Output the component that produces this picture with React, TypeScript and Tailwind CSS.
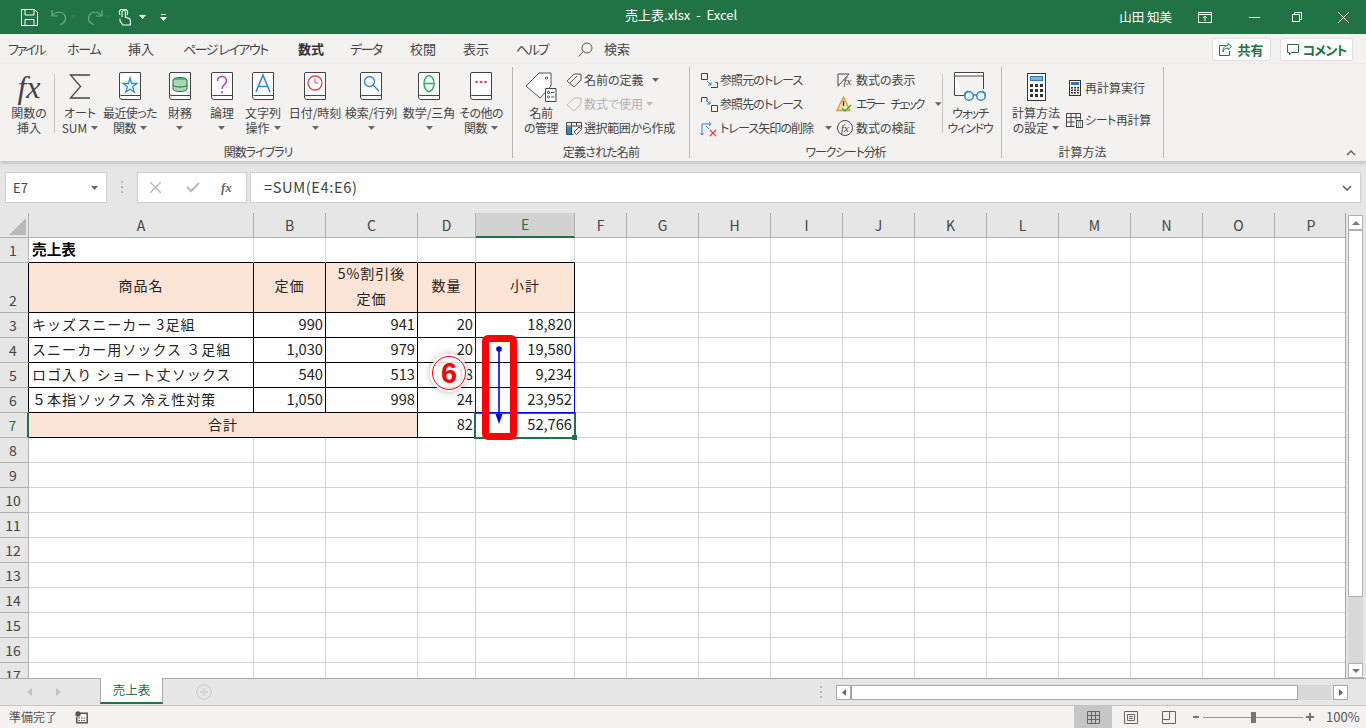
import type { ReactNode } from "react";

const ui = "font-['Noto_Sans_CJK_JP',sans-serif] [font-feature-settings:'palt']";

function Caret({ className = "" }: { className?: string }) {
  return (
    <svg width="7" height="4" viewBox="0 0 7 4" className={className}>
      <path d="M0 0h7L3.5 4z" fill="#666" />
    </svg>
  );
}

function Book({ children }: { children?: ReactNode }) {
  return (
    <svg width="22" height="29" viewBox="0 0 22 29" fill="none">
      <path d="M.5 24V2A1.5 1.5 0 0 1 2 .5h19.5v27H3A2.5 2.5 0 0 1 .5 25V24A2 2 0 0 1 3 23.5h18.5" fill="#fff" stroke="#444" />
      {children}
    </svg>
  );
}

function Big({ w, icon, lines, caret, caretLine = 2, tight = "" }: { w: number; icon: ReactNode; lines: string[]; caret?: boolean; caretLine?: number; tight?: string }) {
  return (
    <div className="flex flex-col items-center shrink-0" style={{ width: w }}>
      <div className="h-[33px] mt-[3px] flex items-center justify-center">{icon}</div>
      <div className={`mt-[2px] text-[12px] text-[#444] text-center whitespace-nowrap ${tight}`}>
        {lines.map((l, i) => (
          <div key={i} className="flex items-center justify-center gap-[4px] h-[15px] leading-[15px]">
            {l}
            {caret && i === caretLine - 1 && <Caret />}
          </div>
        ))}
        {lines.length === 1 && (
          <div className="flex items-center justify-center h-[15px]">
            <Caret />
          </div>
        )}
      </div>
    </div>
  );
}

function Small({ icon, label, caret, dim, gap = "gap-[1px]", caretCls = "ml-[10px]", tight = "" }: { icon: ReactNode; label: string; caret?: boolean; dim?: boolean; gap?: string; caretCls?: string; tight?: string }) {
  return (
    <div className={`flex items-center h-[24px] shrink-0 text-[12px] whitespace-nowrap ${gap} ${dim ? "text-[#b1b1b1]" : "text-[#444]"}`}>
      <span className="w-[18px] h-[18px] flex items-center justify-center shrink-0">{icon}</span>
      <span className={tight}>{label}</span>
      {caret && <Caret className={caretCls} />}
    </div>
  );
}

function Group({ w, label, children, tight = "" }: { w: number; label: string; children: ReactNode; tight?: string }) {
  return (
    <div className="shrink-0 flex flex-col h-[91px] border-r border-[#b9b9b9]" style={{ width: w }}>
      <div className="flex h-[74px]">{children}</div>
      <div className={`text-center text-[12px] leading-[12px] text-[#444] mt-[5px] ${tight}`}>{label}</div>
    </div>
  );
}

const libs: { w: number; lines: string[]; caret?: boolean; tight?: string; icon: ReactNode }[] = [
  { w: 50, lines: ["最近使った", "関数"], caret: true, tight: "tracking-[-0.6px]", icon: <Book><path d="M11 6l1.6 5.5H18l-4.4 3.3 1.7 5.4L11 17l-4.3 3.2 1.7-5.4L4 11.5h5.4z" stroke="#2b88d8" strokeWidth="1.3" /></Book> },
  { w: 50, lines: ["財務"], icon: <Book><ellipse cx="11" cy="8" rx="7" ry="2.6" fill="#5cb57c" stroke="#217346" /><path d="M4 8v9c0 3.4 14 3.4 14 0V8M4 12.5c0 3.4 14 3.4 14 0" fill="#a6d8b6" stroke="#217346" /></Book> },
  { w: 34, lines: ["論理"], icon: <Book><path d="M6.5 9c0-6 9-6 9 0 0 4-4.5 3.5-4.5 8M11 19v2.5" stroke="#b146c2" strokeWidth="1.6" /></Book> },
  { w: 48, lines: ["文字列", "操作"], caret: true, icon: <Book><path d="M4 20L11 3l7 17M6.5 14.5h9" stroke="#2b88d8" strokeWidth="1.6" /></Book> },
  { w: 56, lines: ["日付/時刻"], icon: <Book><circle cx="11" cy="11" r="7" stroke="#e8414d" strokeWidth="1.3" /><path d="M11 6.5V11h3.5" stroke="#e8414d" /></Book> },
  { w: 56, lines: ["検索/行列"], icon: <Book><circle cx="9.5" cy="9.5" r="5" stroke="#2b88d8" strokeWidth="1.3" /><path d="M13 13l6 6" stroke="#2b88d8" strokeWidth="1.3" /></Book> },
  { w: 60, lines: ["数学/三角"], icon: <Book><ellipse cx="11" cy="11.5" rx="5" ry="8" stroke="#22b35e" strokeWidth="1.5" /><path d="M6 11.5h10" stroke="#22b35e" strokeWidth="1.5" /></Book> },
  { w: 44, lines: ["その他の", "関数"], caret: true, tight: "tracking-[-0.5px]", icon: <Book><circle cx="6.5" cy="10" r="1.3" fill="#e8414d" /><circle cx="11" cy="10" r="1.3" fill="#e8414d" /><circle cx="15.5" cy="10" r="1.3" fill="#e8414d" /></Book> },
];

function TitleBar() {
  return (
    <div className={`h-[34px] bg-[#217346] flex items-center text-white relative ${ui}`}>
      <div className="flex items-center w-[170px] pl-[21px]">
        <svg width="17" height="17" viewBox="0 0 17 17" fill="none" stroke="#fff">
          <path d="M.5.5h13l3 3v13H.5zM4 .5V6h9V.5M4 16.5v-6h9v6" />
        </svg>
        <svg width="16" height="17" viewBox="0 0 16 17" fill="none" stroke="#6fa88a" strokeWidth="1.2" className="ml-[13px]">
          <path d="M1 1v6h6M1.5 7C4 2 12 2 14 7c1.5 4-1 7-5 9" />
        </svg>
        <Caret className="ml-[2px] opacity-40" />
        <svg width="16" height="17" viewBox="0 0 16 17" fill="none" stroke="#6fa88a" strokeWidth="1.2" className="ml-[11px]">
          <path d="M15 1v6H9M14.5 7C12 2 4 2 2 7c-1.5 4 1 7 5 9" />
        </svg>
        <Caret className="ml-[2px] opacity-40" />
        <svg width="13" height="17" viewBox="0 0 13 17" fill="none" stroke="#fff" strokeWidth="1.1" className="ml-[6px]">
          <path d="M4 8V3a1.7 1.7 0 0 1 3.4 0v5l4 1.5c1 .5 1 1.5 1 2.5v4H5L2 12V9.5M2 6C0 2 3-.5 5.5.5 8-.5 11 2 9 6" />
        </svg>
        <svg width="7" height="4" viewBox="0 0 7 4" className="ml-[8px]"><path d="M0 0h7L3.5 4z" fill="#fff" /></svg>
        <svg width="7" height="7" viewBox="0 0 7 7" className="ml-[14px]"><path d="M1 0h5v1H1zM0 3h7L3.5 7z" fill="#fff" /></svg>
      </div>
      <div className="absolute left-[625px] top-[6px] text-[13px] leading-[18px] whitespace-nowrap">売上表.xlsx&nbsp; -&nbsp; Excel</div>
      <div className="ml-auto flex items-center">
        <span className="text-[12.5px] mr-[26px]">山田 知美</span>
        <svg width="14" height="11" viewBox="0 0 14 11" fill="none" stroke="#fff" className="mr-[37px]"><path d="M.5.5h13v10H.5zM.5 2.5h13M7 9V4M5 6l2-2 2 2" /></svg>
        <svg width="11" height="1" viewBox="0 0 11 1" className="mr-[32px]"><path d="M0 .5h11" stroke="#fff" /></svg>
        <svg width="10" height="10" viewBox="0 0 10 10" fill="none" stroke="#fff" className="mr-[36px]"><path d="M.5 2.5h7v7h-7zM2.5 2.5v-2h7v7h-2" /></svg>
        <svg width="11" height="11" viewBox="0 0 11 11" stroke="#fff" className="mr-[17px]"><path d="M0 0l11 11M11 0L0 11" /></svg>
      </div>
    </div>
  );
}

function Tabs() {
  const items: { t: string; x: number; on?: boolean; cls?: string }[] = [
    { t: "ファイル", x: 8, cls: "tracking-[-2.2px]" },
    { t: "ホーム", x: 67, cls: "tracking-[-1.3px]" },
    { t: "挿入", x: 128 },
    { t: "ページ レイアウト", x: 183, cls: "tracking-[-1.5px]" },
    { t: "数式", x: 298, on: true },
    { t: "データ", x: 350, cls: "tracking-[-1.6px]" },
    { t: "校閲", x: 410 },
    { t: "表示", x: 463 },
    { t: "ヘルプ", x: 516, cls: "tracking-[-1.6px]" },
  ];
  return (
    <div className={`h-[30px] bg-[#f3f2f1] flex text-[13px] text-[#444] ${ui}`}>
      <div className="relative w-[640px] h-full">
        {items.map(({ t, x, on, cls = "" }) => (
          <div key={t} className={`absolute top-[5px] whitespace-nowrap leading-[19px] ${cls} ${on ? "font-bold border-b-[3px] border-[#217346] h-[29px] text-[#333]" : ""}`} style={{ left: x }}>{t}</div>
        ))}
        <svg width="15" height="15" viewBox="0 0 15 15" fill="none" stroke="#555" className="absolute left-[578px] top-[8px]"><circle cx="9" cy="6" r="5" /><path d="M5.5 9.5L.5 14.5" /></svg>
        <div className="absolute left-[604px] top-[5px] leading-[19px]">検索</div>
      </div>
      <div className="ml-auto flex gap-[9px] pt-[4px] pr-[13px]">
        <div className="w-[59px] h-[23px] bg-white border border-[#e1dfdd] rounded-[2px] flex items-center justify-center gap-[5px] font-bold text-[#217346]">
          <svg width="13" height="13" viewBox="0 0 13 13" fill="none" stroke="#217346"><path d="M9 .5l3.5 3L9 6.5V5C6 5 4.5 6.5 4 9 3.5 5.5 5.5 2.5 9 2.5zM7 2.5H.5v10h10V8" /></svg>
          共有
        </div>
        <div className="w-[73px] h-[23px] bg-white border border-[#e1dfdd] rounded-[2px] flex items-center justify-center gap-[4px] font-bold text-[#217346] tracking-[-0.8px]">
          <svg width="12" height="12" viewBox="0 0 12 12" fill="none" stroke="#217346"><path d="M.5.5h11v8H4.5l-2 2.5V8.5h-2z" /></svg>
          コメント
        </div>
      </div>
    </div>
  );
}

function Ribbon() {
  return (
    <div className={`h-[97px] bg-[#f3f2f1] flex pl-[4px] pt-[3px] relative shadow-[0_2px_4px_rgba(0,0,0,0.18)] z-10 ${ui}`}>
      <Group w={509} label="関数ライブラリ" tight="tracking-[-1px]">
        <Big w={50} lines={["関数の", "挿入"]} icon={<span className="font-['Liberation_Serif',serif] italic text-[32px] leading-[30px] text-[#444]">fx</span>} />
        <div className="w-px h-[59px] bg-[#c8c6c4] mt-[7px] shrink-0" />
        <Big w={50} lines={["オート", "SUM"]} caret icon={<svg width="22" height="25" viewBox="0 0 22 25" fill="none" stroke="#444" strokeWidth="1.3"><path d="M21 1H1.5l10 11.5L1.5 24H21" /></svg>} />
        {libs.map((b) => <Big key={b.lines[0]} w={b.w} lines={b.lines} caret={b.caret} tight={b.tight} icon={b.icon} />)}
      </Group>
      <Group w={177} label="定義された名前" tight="tracking-[-0.8px]">
        <Big w={56} lines={["名前", "の管理"]} tight="tracking-[-0.5px]" icon={
          <svg width="32" height="30" viewBox="0 0 32 30" fill="none" stroke="#555"><path d="M1 14L14 1h12v13l-11 12z" fill="#fff" /><circle cx="21.5" cy="6" r="1.2" /><path d="M20.5 16.5H31v13H20.5z" fill="#fff" stroke="#444" /><path d="M22.5 19.5h2v2h-2zM22.5 24h2v2h-2z" stroke="#2b88d8" /><path d="M26 20.5h3.5M26 25h3.5" stroke="#555" /></svg>
        } />
        <div className="flex flex-col pt-[1px] w-[124px] -ml-[4px]">
          <Small label="名前の定義" caret caretCls="ml-[7px]" icon={<svg width="16" height="15" viewBox="0 0 16 15" fill="none" stroke="#555"><path d="M1 8l7-7h7v6l-7 7zM4 10l7-7" /></svg>} />
          <Small label="数式で使用" dim caret caretCls="ml-[2px] opacity-40" icon={<svg width="16" height="15" viewBox="0 0 16 15" fill="none" stroke="#b8b8b8"><path d="M1 8l7-7h7v6l-7 7z" /></svg>} />
          <Small label="選択範囲から作成" tight="tracking-[-0.4px]" icon={<svg width="16" height="15" viewBox="0 0 16 15" fill="none" stroke="#444"><path d="M.5 1.5h15v6M.5 1.5v12h7M.5 5h15M5.5 1.5V14M10.5 1.5V5" /><rect x="1" y="6" width="4" height="7" fill="#2b88d8" stroke="none" /><path d="M8 11l5-5 2.5 2.5-5 5z" fill="#fff" /></svg>} />
        </div>
      </Group>
      <Group w={312} label="ワークシート分析" tight="tracking-[-1.2px]">
        <div className="flex flex-col pt-[1px] pl-[10px] w-[146px] shrink-0">
          <Small label="参照元のトレース" gap="gap-[2px]" tight="tracking-[-0.9px]" icon={<svg width="17" height="15" viewBox="0 0 17 15" fill="none" stroke="#444"><path d="M.5.5h6v6h-6zM10 14.5h6.5v-5h-2" /><path d="M6 8l4 4M10 9v3H7" stroke="#2b88d8" /></svg>} />
          <Small label="参照先のトレース" gap="gap-[2px]" tight="tracking-[-0.9px]" icon={<svg width="17" height="15" viewBox="0 0 17 15" fill="none" stroke="#444"><path d="M6 4.5V.5H.5V5M10.5 8.5h6v6h-6z" /><path d="M5 3l4 4M9 4v3H6" stroke="#2b88d8" /></svg>} />
          <Small label="トレース矢印の削除" caret caretCls="ml-[10px]" gap="gap-[2px]" tight="tracking-[-0.9px]" icon={<svg width="18" height="17" viewBox="0 0 18 17" fill="none" stroke="#2b88d8"><path d="M2 15V4h9M2 15l-1.5-2M2 15l1.5-2M11 4L9 2.5M11 4L9 5.5M6 6l3 3" /><path d="M10 10l6 6M16 10l-6 6" stroke="#e8414d" strokeWidth="1.3" /></svg>} />
        </div>
        <div className="flex flex-col pt-[1px] w-[106px] shrink-0">
          <Small label="数式の表示" gap="gap-[2px]" icon={<span className="flex items-center"><svg width="17" height="15" viewBox="0 0 17 15" fill="none" stroke="#444"><path d="M1 13V1h11M1 13L12 1" /></svg><span className="absolute ml-[7px] mt-[3px] font-['Liberation_Serif',serif] italic text-[11px] text-[#444]">fx</span></span>} />
          <Small label="エラー チェック" caret gap="gap-[2px]" tight="tracking-[-2px] [word-spacing:6px]" icon={<svg width="18" height="17" viewBox="0 0 18 17" fill="none"><path d="M7.5 1L1 14.5h13z" fill="#fbe0b0" stroke="#e8912d" strokeWidth="1.3" /><path d="M7.5 5v5" stroke="#333" strokeWidth="1.3" /><path d="M6 12l3 3 6-6" stroke="#22b35e" strokeWidth="1.3" /></svg>} />
          <Small label="数式の検証" gap="gap-[2px]" icon={<span className="w-[16px] h-[16px] rounded-full border border-[#444] flex items-center justify-center font-['Liberation_Serif',serif] italic text-[11px] leading-none text-[#444]">fx</span>} />
        </div>
        <div className="w-px h-[59px] bg-[#c8c6c4] mt-[7px] shrink-0" />
        <Big w={54} lines={["ウォッチ", "ウィンドウ"]} tight="tracking-[-1.2px]" icon={
          <svg width="33" height="31" viewBox="0 0 33 31" fill="none" stroke="#444"><path d="M.5 1.5h29V5H.5zM.5 5v19.5h10" fill="#fff" /><path d="M29.5 5v13" /><circle cx="15" cy="25" r="4.3" stroke="#2b88d8" strokeWidth="1.5" fill="#fff" /><circle cx="27" cy="25" r="4.3" stroke="#2b88d8" strokeWidth="1.5" fill="#fff" /><path d="M19 24h4M11 25v-3l3-2M31 25v-3l-3-2" stroke="#2b88d8" strokeWidth="1.3" /></svg>
        } />
      </Group>
      <Group w={162} label="計算方法">
        <Big w={68} lines={["計算方法", "の設定"]} caret icon={
          <svg width="19" height="28" viewBox="0 0 19 28"><rect x=".5" y=".5" width="18" height="27" fill="#fff" stroke="#333" /><rect x="3.5" y="3.5" width="12" height="4" fill="#79b4e3" stroke="#2b79c2" />{[11, 16, 21].map((y) => [3, 8, 13].map((x) => <rect key={`${x}${y}`} x={x} y={y} width="3" height="3" fill="#333" />))}</svg>
        } />
        <div className="flex flex-col pt-[9px] -ml-[4px]">
          <div className="h-[32px] shrink-0"><Small label="再計算実行" icon={<svg width="12" height="16" viewBox="0 0 12 16"><rect x=".5" y=".5" width="11" height="15" fill="#fff" stroke="#333" /><rect x="2" y="2" width="8" height="3" fill="#2b79c2" />{[7, 9.5, 12].map((y) => [2, 5, 8].map((x) => <rect key={`${x}${y}`} x={x} y={y} width="2" height="1.5" fill="#333" />))}</svg>} /></div>
          <Small label="シート再計算" tight="tracking-[-0.4px]" icon={<svg width="18" height="15" viewBox="0 0 18 15" fill="none" stroke="#444"><path d="M.5 14V.5h14v6M.5 4.5h14M.5 9h8M.5 13.5h8M5 .5v13M10 .5v6" /><rect x="10.5" y="7.5" width="6" height="7" fill="#fff" /><path d="M12 9h3" stroke="#2b79c2" /><path d="M12 11h1M14 11h1M12 13h1M14 13h1" /></svg>} />
        </div>
      </Group>
      <svg width="10" height="6" viewBox="0 0 10 6" fill="none" stroke="#666" strokeWidth="1.5" className="absolute right-[10px] bottom-[5px]"><path d="M1 5l4-4 4 4" /></svg>
    </div>
  );
}

function FormulaBar() {
  return (
    <div className="h-[52px] bg-[#e6e6e6] flex items-start pt-[11px] pl-[5px] pr-[5px] font-['Noto_Sans_CJK_JP',sans-serif]">
      <div className="w-[102px] h-[31px] bg-white border border-[#d0d0d0] flex items-center justify-between pl-[7px] pr-[8px] text-[13px] text-[#444]">
        E7
        <Caret />
      </div>
      <div className="w-[30px] flex justify-center pt-[9px]">
        <svg width="3" height="12" viewBox="0 0 3 12"><path d="M0 0h2v2H0zM0 5h2v2H0zM0 10h2v2H0z" fill="#b5b5b5" /></svg>
      </div>
      <div className="w-[110px] h-[31px] bg-white border border-[#d0d0d0] flex items-center text-[#bbb]">
        <svg width="11" height="11" viewBox="0 0 11 11" stroke="#b9b9b9" strokeWidth="1.5" className="ml-[12px]"><path d="M0 0l11 11M11 0L0 11" /></svg>
        <svg width="14" height="11" viewBox="0 0 14 11" fill="none" stroke="#b9b9b9" strokeWidth="2" className="ml-[25px]"><path d="M1 5l4 4 8-8" /></svg>
        <span className="ml-[21px] font-['Liberation_Serif',serif] italic font-bold text-[13px] text-[#666]">fx</span>
      </div>
      <div className="ml-[3px] flex-1 h-[31px] bg-white border border-[#d0d0d0] flex items-center justify-between pl-[13px] pr-[8px] pb-[2px] text-[14.67px] text-[#444] tracking-[0.6px]">
        =SUM(E4:E6)
        <svg width="10" height="6" viewBox="0 0 10 6" fill="none" stroke="#666" strokeWidth="1.7" className="mt-[2px]"><path d="M1 1l4 4 4-4" /></svg>
      </div>
    </div>
  );
}

const colWidths = [225, 72, 92, 58, 99, 52, 72, 72, 72, 72, 72, 72, 72, 72, 72, 72];
const colNames = "ABCDEFGHIJKLMNOP".split("");
const rowHeights = [25, 50, 25, 25, 25, 25, 25, 25, 25, 25, 25, 25, 25, 25, 25, 25, 25];

type Row = { a: string; b: string; c: string; d: string; e: string };
const rows: Row[] = [
  { a: "キッズスニーカー 3足組", b: "990", c: "941", d: "20", e: "18,820" },
  { a: "スニーカー用ソックス ３足組", b: "1,030", c: "979", d: "20", e: "19,580" },
  { a: "ロゴ入り ショート丈ソックス", b: "540", c: "513", d: "18", e: "9,234" },
  { a: "５本指ソックス 冷え性対策", b: "1,050", c: "998", d: "24", e: "23,952" },
];

function Cell({ children, cls = "", span = 1 }: { children?: ReactNode; cls?: string; span?: number }) {
  return (
    <div className={`flex items-center border-r border-b whitespace-nowrap overflow-hidden ${cls}`} style={{ gridColumn: `span ${span}` }}>
      {children}
    </div>
  );
}

const black = "border-black";
const grey = "border-[#d4d4d4]";
const peach = "bg-[#fce4d6]";
const num = "border-black justify-end pr-[2px] pb-[2px]";
const head = "border-black bg-[#fce4d6] justify-center tracking-[1px] pb-[4px] text-[14px]";

function Sheet() {
  const blanks = (n: number, key: string) =>
    Array.from({ length: n }, (_, i) => <Cell key={`${key}${i}`} cls={grey} />);
  const rh = (n: number, cls = "") => (
    <div key={`rh${n}`} className={`bg-[#e6e6e6] border-r border-b border-[#b1b1b1] flex justify-center items-end pb-[2px] text-[14px] leading-[20px] text-[#444] pr-[2px] ${cls}`}>{n}</div>
  );
  return (
    <div className="relative w-[1346px] shrink-0 border-r border-[#a6a6a6] overflow-hidden font-['Noto_Sans_CJK_JP',sans-serif] text-[14.67px] text-[#222]">
      <div
        className="grid w-[1347px] bg-white"
        style={{
          gridTemplateColumns: `29px ${colWidths.map((w) => `${w}px`).join(" ")}`,
          gridTemplateRows: `25px ${rowHeights.map((h) => `${h}px`).join(" ")}`,
        }}
      >
        <div className="bg-[#e6e6e6] border-r border-b border-[#b1b1b1] flex items-end justify-end p-[2px]">
          <svg width="17" height="17" viewBox="0 0 17 17"><path d="M17 0v17H0z" fill="#b9b9b9" /></svg>
        </div>
        {colNames.map((c) => (
          <div key={c} className={`flex items-center justify-center text-[14px] text-[#444] border-r ${c === "E" ? "bg-[#d2d2d2] border-b-2 border-b-[#217346] border-r-[#b1b1b1] text-[#217346]" : "bg-[#e6e6e6] border-b border-[#b1b1b1]"} ${c === "P" ? "border-r-0" : ""}`}>{c}</div>
        ))}

        {rh(1)}
        <Cell cls={`${black} border-r-[#d4d4d4] font-bold pl-[3px] pb-[2px] text-black`}>売上表</Cell>
        <Cell cls={`${black} border-r-[#d4d4d4]`} />
        <Cell cls={`${black} border-r-[#d4d4d4]`} />
        <Cell cls={`${black} border-r-[#d4d4d4]`} />
        <Cell cls={`${black} border-r-[#d4d4d4]`} />
        {blanks(11, "r1")}

        {rh(2, "border-r-black")}
        {["商品名", "定価"].map((t) => <Cell key={t} cls={head}>{t}</Cell>)}
        <Cell cls={`${head} flex-col leading-[25px]`}><span>5%割引後</span><span>定価</span></Cell>
        {["数量", "小計"].map((t) => <Cell key={t} cls={head}>{t}</Cell>)}
        {blanks(11, "r2")}

        {rows.map((r, i) => [
          rh(i + 3, "border-r-black"),
          <Cell key={`a${i}`} cls={`${black} pl-[3px] pb-[2px] text-[14px] tracking-[1.05px]`}>{r.a}</Cell>,
          <Cell key={`b${i}`} cls={num}>{r.b}</Cell>,
          <Cell key={`c${i}`} cls={num}>{r.c}</Cell>,
          <Cell key={`d${i}`} cls={num}>{r.d}</Cell>,
          <Cell key={`e${i}`} cls={num}>{r.e}</Cell>,
          blanks(11, `r${i + 3}`),
        ])}

        {rh(7, "bg-[#d2d2d2] border-r-2 border-r-[#217346] text-[#217346]")}
        <Cell span={3} cls={`${black} ${peach} justify-center tracking-[1px] pb-[2px] text-[14px]`}>合計</Cell>
        <Cell cls={num}>82</Cell>
        <Cell cls={num}>52,766</Cell>
        {blanks(11, "r7")}

        {Array.from({ length: 10 }, (_, i) => [rh(i + 8), blanks(16, `x${i}`)])}
      </div>

      {/* selection, formula range and the call-outs */}
      <div className="absolute left-[474px] top-[199px] w-[102px] h-[27px] border-2 border-[#217346]">
        <div className="absolute right-[-3px] bottom-[-3px] w-[5px] h-[5px] bg-[#217346]" />
      </div>
      <div className="absolute left-[475px] top-[124px] w-[100px] h-[76px] border border-[#0000ff]" />
      <div className="absolute left-[482px] top-[122px] w-[35px] h-[105px] border-[7px] border-[#ff0000] rounded-[6px]" />
      <svg width="10" height="80" viewBox="0 0 10 80" className="absolute left-[494px] top-[133px]">
        <circle cx="5" cy="3" r="2.8" fill="#0000ff" />
        <path d="M5 3v70" stroke="#0000ff" strokeWidth="1.6" />
        <path d="M1.5 68h7L5 78z" fill="#0000ff" />
      </svg>
      <div className="absolute left-[430px] top-[141px] w-[38px] h-[38px] rounded-full bg-white/85 shadow-[0_0_7px_rgba(0,0,0,0.28)] flex items-center justify-center">
        <div className="w-[34px] h-[34px] rounded-full border border-[#ff0000] flex items-center justify-center text-[#ff0000] font-['Liberation_Sans',sans-serif] font-bold text-[29px] leading-none">6</div>
      </div>
    </div>
  );
}

function VScroll() {
  return (
    <div className="w-[20px] bg-[#e6e6e6] flex flex-col pt-[2px] pl-[2px] shrink-0">
      <div className="w-[15px] h-[15px] bg-white border border-[#b1b1b1] flex items-center justify-center">
        <svg width="8" height="4" viewBox="0 0 8 4"><path d="M0 4h8L4 0z" fill="#777" /></svg>
      </div>
      <div className="w-[15px] flex-1 bg-[#d8d8d8]">
        <div className="h-[367px] bg-white border border-[#b1b1b1]" />
      </div>
      <div className="w-[15px] h-[15px] bg-white border border-[#b1b1b1] flex items-center justify-center">
        <svg width="8" height="4" viewBox="0 0 8 4"><path d="M0 0h8L4 4z" fill="#777" /></svg>
      </div>
    </div>
  );
}

function SheetTabs() {
  return (
    <div className="h-[28px] bg-[#e6e6e6] border-t border-[#a6a6a6] border-b border-b-[#c8c6c4] flex font-['Noto_Sans_CJK_JP',sans-serif]">
      <div className="w-[100px] flex items-center">
        <svg width="5" height="8" viewBox="0 0 5 8" className="ml-[27px]"><path d="M5 0v8L0 4z" fill="#c2c2c2" /></svg>
        <svg width="5" height="8" viewBox="0 0 5 8" className="ml-[24px]"><path d="M0 0v8l5-4z" fill="#c2c2c2" /></svg>
      </div>
      <div className="w-[63px] h-[26px] -mt-px bg-white border-x border-[#a6a6a6] border-b-[2px] border-b-[#217346] flex items-center justify-center text-[12.5px] text-[#217346]">売上表</div>
      <svg width="16" height="16" viewBox="0 0 16 16" fill="none" stroke="#cfcfcf" className="ml-[33px] mt-[5px]"><circle cx="8" cy="8" r="7.3" strokeWidth="1.2" /><path d="M8 4v8M4 8h8" strokeWidth="1.5" /></svg>
      <div className="ml-[608px] mt-[7px]">
        <svg width="3" height="12" viewBox="0 0 3 12"><path d="M0 0h2v2H0zM0 5h2v2H0zM0 10h2v2H0z" fill="#b5b5b5" /></svg>
      </div>
      <div className="ml-[13px] mt-[6px] flex h-[15px]">
        <div className="w-[15px] h-[15px] bg-white border border-[#a6a6a6] flex items-center justify-center">
          <svg width="4" height="7" viewBox="0 0 4 7"><path d="M4 0v7L0 3.5z" fill="#666" /></svg>
        </div>
        <div className="w-[447px] h-[15px] bg-white border border-[#a6a6a6]" />
        <div className="w-[33px] h-[15px] bg-[#d8d8d8]" />
        <div className="ml-[2px] w-[15px] h-[15px] bg-white border border-[#a6a6a6] flex items-center justify-center">
          <svg width="4" height="7" viewBox="0 0 4 7"><path d="M0 0v7l4-3.5z" fill="#666" /></svg>
        </div>
      </div>
    </div>
  );
}

function StatusBar() {
  return (
    <div className="h-[22px] bg-[#f3f2f1] flex items-center text-[12px] text-[#555] font-['Noto_Sans_CJK_JP',sans-serif]">
      <span className="ml-[9px]">準備完了</span>
      <svg width="13" height="13" viewBox="0 0 13 13" className="ml-[18px]"><circle cx="3" cy="3" r="2.7" fill="#555" /><path d="M5 1.5h8v11H1V6h1.5v5h9V3H5z" fill="#555" /><path d="M3.5 7h7M3.5 9.5h7" stroke="#555" strokeDasharray="1.5 1" /></svg>
      <div className="ml-auto flex items-center h-full">
        <div className="w-[38px] h-full bg-[#c6c6c6] flex items-center justify-center">
          <svg width="13" height="13" viewBox="0 0 13 13" fill="none" stroke="#666"><path d="M.5.5h12v12H.5zM4.5.5v12M8.5.5v12M.5 4.5h12M.5 8.5h12" /></svg>
        </div>
        <svg width="14" height="13" viewBox="0 0 14 13" fill="none" stroke="#666" className="ml-[12px]"><path d="M.5.5h13v12H.5zM3.5 3.5h7v6h-7zM5 5.5h4M5 7.5h4" /></svg>
        <svg width="14" height="13" viewBox="0 0 14 13" fill="none" stroke="#666" className="ml-[24px]"><path d="M.5.5h13v12H.5zM.5 8.5h7V.5" /></svg>
        <div className="w-[6px] h-[2px] bg-[#777] ml-[17px]" />
        <div className="ml-[4px] w-[100px] h-px bg-[#999] relative">
          <div className="absolute left-[48px] -top-[5px] w-[5px] h-[11px] bg-[#777]" />
        </div>
        <div className="ml-[3px] w-[8px] h-[8px] relative"><div className="absolute left-0 top-[3px] w-[8px] h-[2px] bg-[#777]" /><div className="absolute left-[3px] top-0 w-[2px] h-[8px] bg-[#777]" /></div>
        <span className="ml-[12px] w-[40px] text-[13px]">100%</span>
      </div>
    </div>
  );
}

export default function App() {
  return (
    <div className="w-[1366px] h-[728px] flex flex-col overflow-hidden bg-[#e6e6e6]">
      <TitleBar />
      <Tabs />
      <Ribbon />
      <FormulaBar />
      <div className="flex h-[465px]">
        <Sheet />
        <VScroll />
      </div>
      <SheetTabs />
      <StatusBar />
    </div>
  );
}
